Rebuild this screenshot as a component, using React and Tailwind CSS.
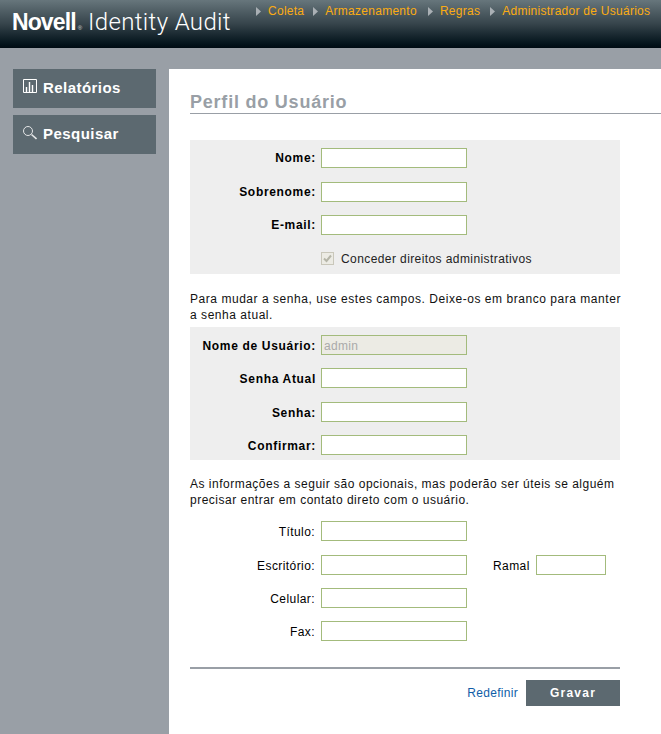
const Field = ({ label, bold, value, disabled, children, h, low }) => (
  <div className={`flex items-center ${h}`}>
    <div className={`w-[131px] text-right text-black ${low ? 'pt-[2px]' : ''} ${bold ? 'pr-[5px] font-bold tracking-[0.68px]' : 'pr-[6px] tracking-[0.42px]'}`}>{label}</div>
    <div className={`w-[146px] h-[20px] border border-[#a3bb7c] px-[2px] text-[12px] leading-[20px] tracking-[0.3px] text-[#aaa] ${disabled ? 'bg-[#ecebe4]' : 'bg-white'}`}>{value}</div>
    {children}
  </div>
);

const Nav = ({ children, gap }) => (
  <div className={`flex items-center ${gap}`}>
    <svg width="5" height="9" viewBox="0 0 5 9" className="mr-[7px]"><path d="M0 0 L5 4.5 L0 9 Z" fill="#aab0b5" /></svg>
    <span>{children}</span>
  </div>
);

export default function App() {
  return (
    <div className="w-[661px] h-[734px] overflow-hidden bg-[#999fa6] text-[12px] leading-[16px] font-['Liberation_Sans',sans-serif]">
      <header className="h-[48px] flex bg-gradient-to-b from-[#67767c] via-[#36444b] to-[#000b13]">
        <div className="w-[256px] pl-[12px] pt-[8px] flex items-baseline text-white leading-[28px]">
          <span className="text-[23px] font-bold tracking-[-0.9px]">Novell</span>
          <span className="text-[6px] ml-[2px] mr-[6px] text-[#ddd]">®</span>
          <span className="text-[24px] font-light font-['Roboto',sans-serif] tracking-[0.35px] text-white">Identity Audit</span>
        </div>
        <nav className="flex pt-[6px] text-[#fcac12] tracking-[0.27px] h-[16px]">
          <Nav gap="mr-[9px]">Coleta</Nav>
          <Nav gap="mr-[11px]">Armazenamento</Nav>
          <Nav gap="mr-[10px]">Regras</Nav>
          <Nav>Administrador de Usuários</Nav>
        </nav>
      </header>
      <div className="flex pt-[21px] h-[686px]">
        <aside className="w-[169px] pl-[13px] flex flex-col gap-[7px]">
          <div className="w-[143px] h-[39px] bg-[#5c6970] flex items-center pl-[10px] pb-[2px] text-white font-bold text-[15px] tracking-[0.45px]">
            <svg width="14" height="15" viewBox="0 0 14 15" className="mr-[6px] mb-[2px]" fill="none" stroke="#fff"><path d="M.5.5h13v13H.5z" /><path d="M3.5 8v5.5M6.5 3v10.5M9.5 6v7.5" strokeWidth="1.4" /></svg>
            Relatórios
          </div>
          <div className="w-[143px] h-[39px] bg-[#5c6970] flex items-center pl-[10px] pb-[2px] text-white font-bold text-[15px] tracking-[0.45px]">
            <svg width="14" height="15" viewBox="0 0 14 15" className="mr-[6px] mb-[2px]" fill="none" stroke="#e4e6e7"><circle cx="5" cy="6" r="4.5" /><path d="M8.5 9.5l5 4.5" strokeWidth="1.6" /></svg>
            Pesquisar
          </div>
        </aside>
        <main className="w-[492px] bg-white pl-[21px]">
          <h1 className="h-[45px] pt-[22px] border-b border-[#999fa6] text-[#999fa6] text-[18px] leading-[22px] font-bold tracking-[0.78px]">Perfil do Usuário</h1>
          <div className="w-[430px]">
            <section className="mt-[26px] h-[134px] bg-[#eeeeee] pt-[8px]">
              <Field bold label="Nome:" h="h-[20px]" />
              <Field bold label="Sobrenome:" h="h-[20px] mt-[14px]" />
              <Field bold label="E-mail:" h="h-[20px] mt-[13px]" />
              <div className="flex items-center ml-[131px] mt-[16px] h-[14px] tracking-[0.41px] text-[#222]">
                <span className="w-[13px] h-[13px] border border-[#c9c7ba] bg-[#ecebe4] flex items-center justify-center">
                  <svg width="9" height="9" viewBox="0 0 9 9" fill="none" stroke="#b5b5a8" strokeWidth="2"><path d="M1 4.5l2.5 2.5L8 1.5" /></svg>
                </span>
                <span className="ml-[7px] pt-[2px]">Conceder direitos administrativos</span>
              </div>
            </section>
            <p className="mt-[17px] h-[36px] whitespace-nowrap tracking-[0.54px] text-[#111]">Para mudar a senha, use estes campos. Deixe-os em branco para manter<br />a senha atual.</p>
            <section className="h-[133px] bg-[#eeeeee] pt-[8px]">
              <Field bold low label="Nome de Usuário:" value="admin" disabled h="h-[20px]" />
              <Field bold low label="Senha Atual" h="h-[20px] mt-[13px]" />
              <Field bold low label="Senha:" h="h-[20px] mt-[14px]" />
              <Field bold low label="Confirmar:" h="h-[20px] mt-[13px]" />
            </section>
            <p className="mt-[16px] h-[45px] tracking-[0.5px] text-[#111]">As informações a seguir são opcionais, mas poderão ser úteis se alguém precisar entrar em contato direto com o usuário.</p>
            <Field low label="Título:" h="h-[20px]" />
            <Field low label="Escritório:" h="h-[20px] mt-[14px]">
              <span className="ml-[26px] w-[43px] pt-[2px] tracking-[0.42px]">Ramal</span>
              <span className="w-[70px] h-[20px] border border-[#a3bb7c] bg-white" />
            </Field>
            <Field low label="Celular:" h="h-[20px] mt-[13px]" />
            <Field low label="Fax:" h="h-[20px] mt-[13px]" />
            <div className="mt-[26px] h-[2px] bg-[#999fa6]" />
            <div className="mt-[11px] flex justify-end items-center">
              <a className="text-[#0f5ea8] tracking-[0.3px] mr-[8px]">Redefinir</a>
              <div className="w-[94px] h-[26px] bg-[#5c6970] text-white font-bold text-center leading-[26px] tracking-[1.25px]">Gravar</div>
            </div>
          </div>
        </main>
      </div>
    </div>
  );
}
